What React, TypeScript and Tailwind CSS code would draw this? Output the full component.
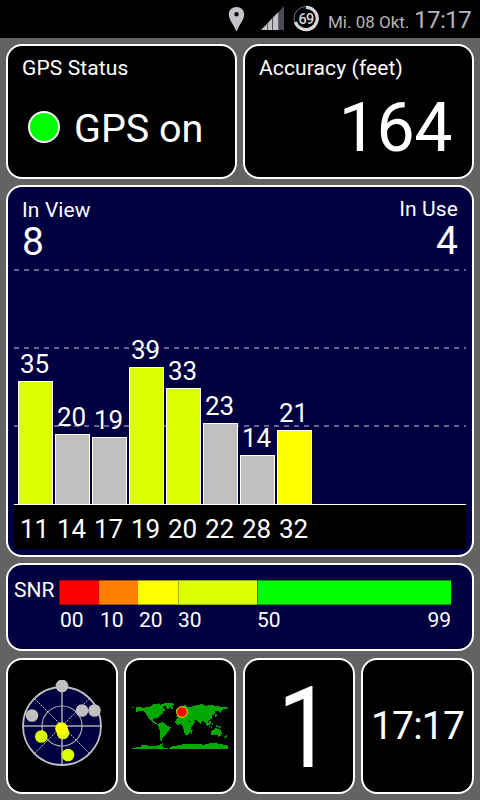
import React from 'react';

interface CardProps {
  className?: string;
  children: React.ReactNode;
}

const Card: React.FC<CardProps> = ({ className = '', children }) => (
  <section className={`rounded-2xl border-2 border-white overflow-hidden ${className}`}>
    {children}
  </section>
);

const satellites = [
  { prn: '11', snr: 35, height: 123, color: '#dcff00' },
  { prn: '14', snr: 20, height: 70, color: '#c0c0c0' },
  { prn: '17', snr: 19, height: 67, color: '#c0c0c0' },
  { prn: '19', snr: 39, height: 137, color: '#dcff00' },
  { prn: '20', snr: 33, height: 116, color: '#dcff00' },
  { prn: '22', snr: 23, height: 81, color: '#c0c0c0' },
  { prn: '28', snr: 14, height: 49, color: '#c0c0c0' },
  { prn: '32', snr: 21, height: 74, color: '#ffff00' },
];

const StatusBar = () => (
  <header className="flex h-[38px] shrink-0 items-start bg-black pl-[228px] text-[#b5b5bb]">
    <svg className="mt-[7px] h-[25px] w-[17px]" viewBox="0 0 17 25" fill="#c4c4c8">
      <path
        fillRule="evenodd"
        d="M8.5 0C4 0 .8 3.2.8 7.4c0 5.2 5 10.200 7.700 17.200 2.700-7 7.700-12 7.700-17.200C16.200 3.200 13 0 8.500 0zm0 5a2.200 2.200 0 1 1 0 4.400 2.200 2.200 0 0 1 0-4.400z"
      />
    </svg>
    <svg className="ml-[16px] mt-[6px] h-6 w-[23px]" viewBox="0 0 23 24">
      <path d="M18 5.500L23 0v24h-5z" fill="#4a4a58" />
      <path d="M0 24l6-6.300V24zM6.500 24v-6.800l4.700-4.900V24zM11.800 24V11.700l5.700-5.900V24z" fill="#c4c4c8" />
    </svg>
    <svg className="ml-[9px] mt-[5px] h-[27px] w-[27px]" viewBox="0 0 27 27">
      <circle cx="13" cy="13.500" r="12" fill="none" stroke="#77777c" strokeWidth="1" />
      <path d="M13 2.300A11.200 11.200 0 1 1 2.400 17" fill="none" stroke="#d6d6dc" strokeWidth="3.200" />
      <text x="13" y="18.500" textAnchor="middle" fontSize="14.500" fontWeight="500" letterSpacing="-0.700" fill="#d6d6dc">69</text>
    </svg>
    <span className="ml-[8px] mt-[12px] w-[86px] whitespace-nowrap text-[17px] leading-5">Mi. 08 Okt.</span>
    <span className="mt-[8px] whitespace-nowrap text-[24px] leading-6 tracking-[-0.5px]">17:17</span>
  </header>
);

const SignalChart = () => (
  <svg className="ml-[6px] block" width="452" height="290" viewBox="14 260 452 290">
    {[270, 348, 426].map((y) => (
      <path key={y} d={`M14 ${y}H466`} stroke="#66668c" strokeWidth="2" strokeDasharray="5 5" />
    ))}
    <rect x="14" y="505" width="452" height="44" fill="#000" />
    {satellites.map(({ prn, snr, height, color }, i) => (
      <g key={prn} fontSize="26" fill="#fff" textAnchor="middle">
        <rect x={18.5 + i * 37} y={504.5 - height} width="34" height={height} fill={color} stroke="#fff" />
        <text x={34.5 + i * 37} y={496 - height}>{snr}</text>
        <text x={34.5 + i * 37} y="538">{prn}</text>
      </g>
    ))}
    <path d="M14 504.500H466" stroke="#fff" />
  </svg>
);

const SnrScale = () => (
  <Card className="flex h-[88px] bg-[#000040] pl-[6px] text-[21px] leading-6">
    <span className="mt-[13px] w-[45px]">SNR</span>
    <div className="mt-[15px] w-[392px]">
      <div className="flex h-[25px]">
        <div className="w-[40px] border-y border-l border-black/40 bg-[#ff0000]" />
        <div className="w-[39px] border-y border-black/40 bg-[#ff8000]" />
        <div className="w-[40px] border-y border-black/40 bg-[#ffff00]" />
        <div className="w-[79px] border-y border-l border-black/30 bg-[#dcff00]" />
        <div className="flex-1 border-y border-l border-black/40 bg-[#00ff00]" />
      </div>
      <div className="mt-[3px] flex">
        <span className="w-[40px] pl-px">00</span>
        <span className="w-[39px] pl-px">10</span>
        <span className="w-[39px] pl-px">20</span>
        <span className="w-[80px] pl-px">30</span>
        <span className="flex-1">50</span>
        <span>99</span>
      </div>
    </div>
  </Card>
);

const SkyPlot = () => (
  <svg width="84" height="92" viewBox="20 680 84 92">
    <circle cx="62" cy="726" r="39" fill="#000040" />
    <path d="M62 687V765M23 726H101" stroke="#80808c" strokeWidth="2" />
    <path d="M34.500 698.500L89.500 753.500M89.500 698.500L34.500 753.500" stroke="#c0c0c0" strokeWidth="1" strokeDasharray="2 1" />
    <circle cx="62" cy="726" r="20" fill="none" stroke="#a8a8b0" strokeWidth="1.200" />
    <circle cx="62" cy="726" r="39" fill="none" stroke="#c0c0c0" strokeWidth="1.800" />
    <g fill="#c0c0c0">
      <circle cx="62" cy="686" r="6.300" />
      <circle cx="32" cy="715.500" r="6.300" />
      <circle cx="82" cy="710.500" r="6.300" />
      <circle cx="94.500" cy="710.500" r="6.300" />
    </g>
    <g fill="#dcff00">
      <circle cx="41.300" cy="736.500" r="6.300" />
      <circle cx="68" cy="755" r="6.300" />
      <circle cx="63" cy="733" r="6.300" />
    </g>
    <circle cx="61.500" cy="728.500" r="6.300" fill="#ffff00" />
  </svg>
);

const WorldMap = () => (
  <svg width="96" height="48" viewBox="36 36 288 144">
    <g fill="#00a800" shapeRendering="crispEdges">
      <path d="M36 51h5v4h-5zM48 51l24 2 22-4 6-7 18-2 4 5 10 2-3 7 8 6-7 4-2 7-8 4-4 7-5 4-7-1-6 4 3 6 6 1 5 5 6 1-2 3-10-4-11-6-8-9-6-9-4-9-9-5-12 1-8 4z" />
      <path d="M122 42l18-3 24 2-5 7-8 4-6 6-5-2-3-7-12-4z" />
      <path d="M118 98l10-1 9 5 5 5 10 4-1 7-7 7-5 7-6 6-5 6-3 8-4-2v-26l-5-9-1-8z" />
      <path d="M168 57l4-3 3 7-5 3zM152 52h7v4h-7zM168 81l4-10 8-6-3-6 8-10 10-4 8 7 14-3 9-3 12-1 6-3 12 5 18-2 18 4 32 2v4l-15 3-5 4-3 8-4-8-12 2-2 9-7 4 1 7-8 5-3 5-8-3 3 8 5 6-4 3-6-9-5-6-6 1-3 10-5-8-7-5-9-1 6 5-4 5-9 4-8-14-8-5-8 2-11-5z" />
      <path d="M174 82l15-2 5 3 11 2 4 11 5 5h7l-7 12-2 12-9 10-7 1-5-15-2-12-6-6-12 1-5-7 1-8z" />
      <path d="M214 121h4l-2 10h-4zM257 92h4l7 11-3 2zM267 94l7-1v8l-6 3zM266 108l11 3v2l-11-2zM277 99h3v7h-3zM286 105l12 3 5 6-14-4zM284 75l5-5 2 5-7 9zM272 123l9-3 5-5 7 1 3 3 3-4 3 7 4 7-3 8-6 1-8-4-14 3zM294 138h4v3h-4zM318 134l3 4-5 6-3-1z" />
      <path d="M36 178v-5l26-1 2-6 14-1 8 2h25l13-5 6-6v6l-4 6 5 5 14 3 15-8 22-3 12-4 46 1 10 3 27-7 31 5 16 4v11z" />
    </g>
    <circle cx="186" cy="66" r="16" fill="#ff0000" stroke="#ffe000" strokeWidth="3" />
  </svg>
);

const App: React.FC = () => (
  <div className="flex h-[800px] w-[480px] flex-col overflow-hidden bg-[#636363] font-[Roboto,sans-serif] text-white">
    <StatusBar />
    <main className="flex flex-col gap-[6px] p-[6px]">
      <div className="grid grid-cols-2 gap-[6px]">
        <Card className="h-[135px] bg-black pl-[14px] pt-[10px]">
          <h2 className="text-[21px] leading-6 tracking-[0.12px]">GPS Status</h2>
          <div className="mt-[24px] flex items-start">
            <span className="ml-[6px] mt-[7px] h-[32px] w-[32px] rounded-full border-2 border-white bg-[#00ff00]" />
            <span className="ml-[14px] mt-px whitespace-nowrap text-[39.500px] leading-[48px]">GPS on</span>
          </div>
        </Card>
        <Card className="h-[135px] bg-black pl-[14px] pt-[10px]">
          <h2 className="text-[21px] leading-6 tracking-[0.12px]">Accuracy (feet)</h2>
          <div className="mt-[12px] pr-[20px] text-right text-[68px] leading-[72px] tracking-[-0.5px]">164</div>
        </Card>
      </div>

      <Card className="h-[372px] bg-[#000040]">
        <div className="flex h-[73px] justify-between px-[14px] pt-[11px]">
          <div>
            <div className="text-[21px] leading-6 tracking-[0.12px]">In View</div>
            <div className="text-[39px] leading-10">8</div>
          </div>
          <div className="-mt-px text-right">
            <div className="text-[21px] leading-6 tracking-[0.12px]">In Use</div>
            <div className="text-[39px] leading-10">4</div>
          </div>
        </div>
        <SignalChart />
      </Card>

      <SnrScale />

      <div className="mt-px flex h-[136px] justify-between">
        <Card className="flex w-[112px] items-center justify-center bg-black">
          <SkyPlot />
        </Card>
        <Card className="flex w-[112px] items-center justify-center bg-black">
          <WorldMap />
        </Card>
        <Card className="w-[112px] bg-black pl-[12px] pt-[2px] text-center text-[114px] leading-[132px]">
          <span className="inline-block scale-x-[0.86]">1</span>
        </Card>
        <Card className="w-[113px] whitespace-nowrap bg-black text-center text-[39px] leading-[132px] tracking-[-0.8px]">17:17</Card>
      </div>
    </main>
  </div>
);

export default App;
